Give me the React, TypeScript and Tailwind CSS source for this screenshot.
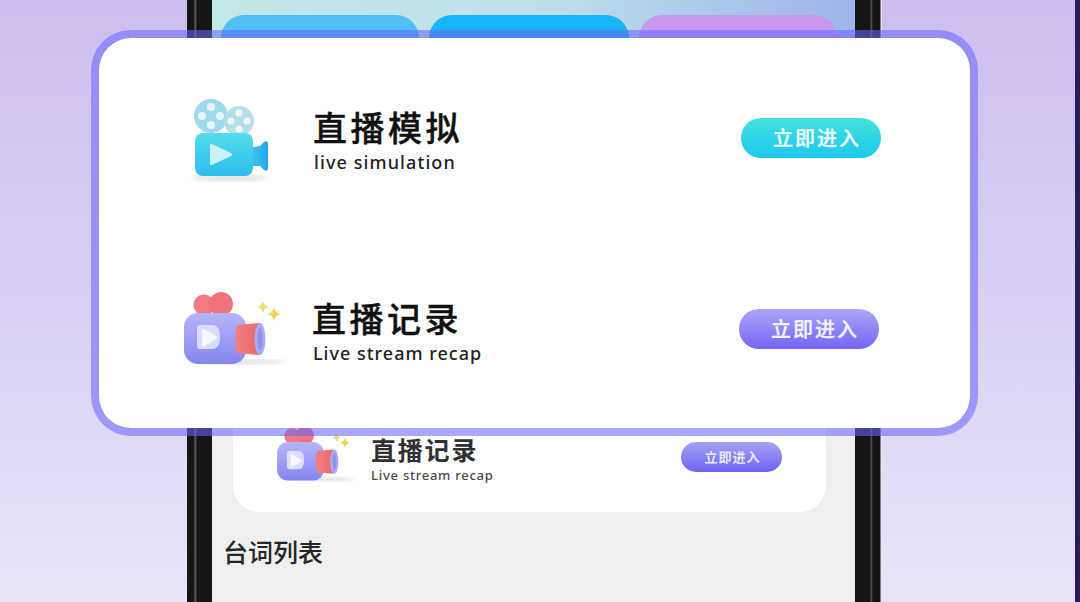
const CJK = "font-['Noto_Sans_CJK_SC','Noto_Sans',sans-serif]";

function BlueCamera({ className }: { className: string }) {
  return (
    <svg viewBox="0 4 110 95" className={className}>
      <defs>
        <linearGradient id="blueBody" x1="0" y1="0" x2="0" y2="1">
          <stop offset="0" stopColor="#55dcec" />
          <stop offset="1" stopColor="#2bbdec" />
        </linearGradient>
        <linearGradient id="blueLens" x1="0" y1="0" x2="1" y2="0">
          <stop offset="0" stopColor="#4cc6ee" />
          <stop offset="1" stopColor="#1fa8ea" />
        </linearGradient>
        <filter id="blueSoft">
          <feGaussianBlur stdDeviation="2.5" />
        </filter>
      </defs>
      <ellipse cx="50" cy="88" rx="38" ry="3" fill="#b9c6cc" opacity="0.55" filter="url(#blueSoft)" />
      <circle cx="31" cy="26" r="17" fill="#9fd9ec" />
      <circle cx="59" cy="31" r="15" fill="#b6dfe9" />
      {[[31, 17], [22, 26], [40, 26], [31, 35]].map(([x, y]) => (
        <circle key={`${x}-${y}`} cx={x} cy={y} r="4" fill="#e8f6fa" />
      ))}
      {[[59, 23], [51, 31], [67, 31], [59, 39]].map(([x, y]) => (
        <circle key={`${x}-${y}`} cx={x} cy={y} r="3.5" fill="#eef8fa" />
      ))}
      <path d="M68 58 L80 56 L84 52 Q88 50 88 54 V78 Q88 82 84 80 L80 76 L68 76 Z" fill="url(#blueLens)" />
      <rect x="15" y="43" width="58" height="43" rx="8" fill="url(#blueBody)" />
      <path d="M30 55 Q30 53 32 54 L51 63 Q53 65 51 66 L32 75 Q30 76 30 74 Z" fill="#c9f1f6" />
    </svg>
  );
}

function PurpleCamera({ className }: { className: string }) {
  return (
    <svg viewBox="0 0 110 85" className={className}>
      <defs>
        <linearGradient id="purpleBody" x1="0" y1="0" x2="0" y2="1">
          <stop offset="0" stopColor="#b4b6fa" />
          <stop offset="1" stopColor="#8586ee" />
        </linearGradient>
        <linearGradient id="redLens" x1="0" y1="0" x2="1" y2="0">
          <stop offset="0" stopColor="#f27f80" />
          <stop offset="1" stopColor="#e8696f" />
        </linearGradient>
        <filter id="purpleSoft">
          <feGaussianBlur stdDeviation="2" />
        </filter>
      </defs>
      <ellipse cx="62" cy="73" rx="44" ry="2.5" fill="#c8c8d4" opacity="0.6" filter="url(#purpleSoft)" />
      <circle cx="24" cy="16" r="10.5" fill="#ee7c80" />
      <circle cx="41" cy="15" r="12" fill="#ef7378" />
      <rect x="4" y="24" width="62" height="51" rx="14" fill="url(#purpleBody)" />
      <path d="M17 39 Q17 36 20 36 H32 Q40 36 40 48 Q40 60 32 60 H20 Q17 60 17 57 Z" fill="#d9dcfb" />
      <path d="M22 41 Q22 39 24 40 L36 47 Q38 49 36 50 L24 57 Q22 58 22 56 Z" fill="#f5f6ff" />
      <path d="M57 36 L79 34 V66 L57 64 Q53 50 57 36 Z" fill="url(#redLens)" />
      <ellipse cx="80" cy="50" rx="5.5" ry="16" fill="#a9acf5" />
      <ellipse cx="80" cy="50" rx="2.5" ry="11.5" fill="#8e90ea" />
      <path d="M83 12 Q84 17 89 18 Q84 19 83 24 Q82 19 77 18 Q82 17 83 12 Z" fill="#eedd7a" />
      <path d="M94 18 Q95 24 101 25 Q95 26 94 32 Q93 26 87 25 Q93 24 94 18 Z" fill="#ecd45e" />
    </svg>
  );
}

export default function App() {
  return (
    <div className={`relative flex h-[602px] w-[1080px] overflow-hidden bg-[linear-gradient(180deg,#cfbcf0_0%,#d6ccf2_40%,#e8e5f8_100%)] ${CJK}`}>
      {/* Phone behind the popup */}
      <div className="ml-[187px] flex h-full w-[695px]">
        <div className="h-full w-[25px] bg-[linear-gradient(90deg,#151515_0,#151515_7px,#6b6b6b_8px,#151515_10px,#151515_100%)]" />
        <div className="flex w-[643px] flex-col bg-[#efefef]">
          <div className="flex h-[38px] shrink-0 items-end gap-[10px] bg-[linear-gradient(90deg,#c3e8e8_0%,#bfe0ea_50%,#9fb4ea_100%)] pl-[9px] pr-[18px]">
            <div className="h-[23px] w-[198px] rounded-t-[26px] bg-[#52c0f4]" />
            <div className="h-[23px] w-[201px] rounded-t-[26px] bg-[#14b6f6]" />
            <div className="h-[23px] w-[198px] rounded-t-[26px] bg-[#c898ee]" />
          </div>
          <div className="ml-[21px] mt-[340px] flex h-[134px] w-[593px] items-end rounded-b-[26px] bg-white pb-[24px] pl-[41px] pr-[44px]">
            <PurpleCamera className="h-[64px] w-[83px] shrink-0" />
            <div className="mb-[3px] ml-[14px] flex flex-1 flex-col">
              <div className="text-[25px] font-bold leading-[28px] tracking-[1.8px] text-[#303030]">直播记录</div>
              <div className="mt-[2px] font-['Noto_Sans',sans-serif] text-[13px] font-medium leading-[20px] tracking-[0.75px] text-[#4a4a4a]">Live stream recap</div>
            </div>
            <div className="mb-[16px] flex h-[30px] w-[101px] items-center justify-center rounded-full bg-[linear-gradient(180deg,#a5a3f6,#6d64f2)] pl-[2px] text-[13px] font-bold tracking-[1px] text-[#e8e8ff]">
              立即进入
            </div>
          </div>
          <div className="ml-[11px] mt-[23px] text-[25px] font-medium leading-[32px] text-[#262626]">台词列表</div>
        </div>
        <div className="h-full w-[27px] bg-[linear-gradient(90deg,#151515_0,#151515_15px,#5a5a5a_16px,#151515_18px,#151515_25px,#e8e6f6_26px)]" />
      </div>
      <div className="ml-auto h-full w-[5px] bg-[#2c1d58]" />

      {/* Popup */}
      <div className="absolute left-[91px] top-[30px] flex h-[406px] w-[887px] flex-col rounded-[40px] border-[8px] border-[#6966fc]/[0.57] bg-white bg-clip-padding">
        <div className="mt-[56px] flex h-[95px] items-center pl-[81px] pr-[89px]">
          <BlueCamera className="h-[95px] w-[110px] shrink-0" />
          <div className="-mt-[1px] ml-[23px] flex flex-1 flex-col">
            <div className="text-[34px] font-medium leading-[38px] tracking-[3.5px] text-[#111] [-webkit-text-stroke:0.4px_#111]">直播模拟</div>
            <div className="mt-[4px] pl-[1px] font-['Noto_Sans',sans-serif] text-[18px] font-medium leading-[24px] tracking-[1.1px] text-[#222]">live simulation</div>
          </div>
          <div className="mb-[8px] flex h-[40px] w-[140px] items-center justify-center rounded-full bg-[linear-gradient(180deg,#44e0da,#1cc8ee)] pl-[12px] text-[20px] font-medium tracking-[2px] text-[#effcff] [-webkit-text-stroke:0.3px_#effcff]">
            立即进入
          </div>
        </div>
        <div className="mt-[100px] flex h-[85px] items-center pl-[81px] pr-[91px]">
          <PurpleCamera className="h-[85px] w-[110px] shrink-0" />
          <div className="ml-[22px] flex flex-1 flex-col">
            <div className="text-[34px] font-medium leading-[38px] tracking-[3.5px] text-[#111] [-webkit-text-stroke:0.4px_#111]">直播记录</div>
            <div className="mt-[4px] pl-[1px] font-['Noto_Sans',sans-serif] text-[18px] font-medium leading-[24px] tracking-[1px] text-[#222]">Live stream recap</div>
          </div>
          <div className="mb-[6px] flex h-[40px] w-[140px] items-center justify-center rounded-full bg-[linear-gradient(180deg,#a9a6f7,#7266f4)] pl-[12px] text-[20px] font-medium tracking-[2px] text-[#f2f2ff] [-webkit-text-stroke:0.3px_#f2f2ff]">
            立即进入
          </div>
        </div>
      </div>
    </div>
  );
}
